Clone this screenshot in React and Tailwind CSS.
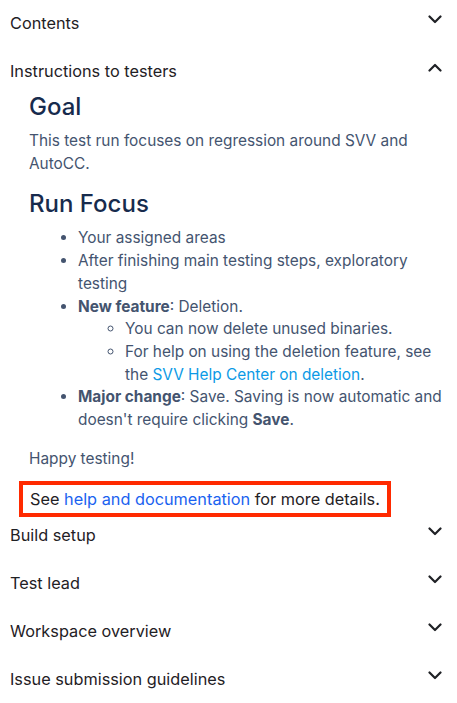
import React from "react";

function Chevron({ up }) {
  return (
    <svg width="14" height="9" viewBox="0 0 14 9" className="shrink-0" aria-hidden="true">
      <polyline
        points={up ? "1.5,7.5 7,2 12.5,7.5" : "1.5,1.5 7,7 12.5,1.5"}
        fill="none"
        stroke="#1f2125"
        strokeWidth="2.2"
        strokeLinecap="round"
        strokeLinejoin="round"
      />
    </svg>
  );
}

function Header({ title, up }) {
  return (
    <div className="flex h-9 items-center justify-between pr-[15px]">
      <span className="text-[16.3px] text-[#1f2125]">{title}</span>
      <span className="-mt-[8px] flex">
        <Chevron up={up} />
      </span>
    </div>
  );
}

export default function App() {
  const collapsed = ["Build setup", "Test lead", "Workspace overview", "Issue submission guidelines"];
  return (
    <div className="min-h-[703px] bg-white pt-[5px] pl-[10px]" style={{ fontFamily: "Inter, 'Noto Sans', sans-serif" }}>
      <div className="mb-3">
        <Header title="Contents" />
      </div>
      <div>
        <Header title="Instructions to testers" up />
        <div className="pl-[19px] pr-[8px] pt-[2px] text-[15.4px] leading-[22.7px] text-[#44546f]">
          <h2 className="text-[24px] leading-[32px] font-medium text-[#172b4d]">Goal</h2>
          <p className="mt-[7px]">This test run focuses on regression around SVV and AutoCC.</p>
          <h2 className="mt-[13px] text-[24px] leading-[32px] font-medium text-[#172b4d]">Run Focus</h2>
          <ul className="mt-[7px] list-disc pl-[49px]">
            <li>Your assigned areas</li>
            <li>After finishing main testing steps, exploratory testing</li>
            <li>
              <strong className="font-bold">New feature</strong>: Deletion.
              <ul className="list-[circle] pl-[47px]">
                <li>You can now delete unused binaries.</li>
                <li>
                  For help on using the deletion feature, see the{" "}
                  <a className="text-[#0c9ae6]">SVV Help Center on deletion</a>.
                </li>
              </ul>
            </li>
            <li>
              <strong className="font-bold">Major change</strong>: Save. Saving is now automatic and doesn't require clicking{" "}
              <strong className="font-bold">Save</strong>.
            </li>
          </ul>
          <p className="mt-[16px]">Happy testing!</p>
        </div>
        <div className="mt-[11px] ml-[9px] inline-block border-4 border-[#ff2a00] px-[7px] py-[2.6px] text-[16.3px] leading-[22.7px] text-[#1f2125]">
          See <a className="text-[#1a62f0]">help and documentation</a> for more details.
        </div>
      </div>
      {collapsed.map((t) => (
        <div key={t} className="mb-3">
          <Header title={t} />
        </div>
      ))}
    </div>
  );
}
